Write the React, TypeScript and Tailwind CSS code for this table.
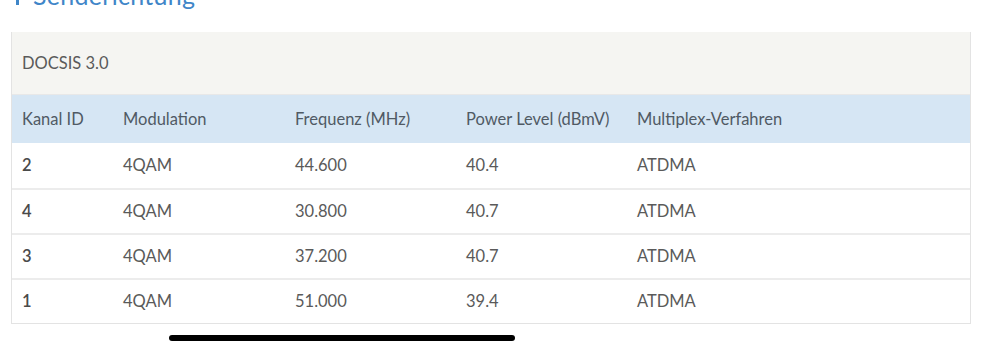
import React from 'react';

const rows = [
  { id: '2', mod: '4QAM', freq: '44.600', power: '40.4', mux: 'ATDMA' },
  { id: '4', mod: '4QAM', freq: '30.800', power: '40.7', mux: 'ATDMA' },
  { id: '3', mod: '4QAM', freq: '37.200', power: '40.7', mux: 'ATDMA' },
  { id: '1', mod: '4QAM', freq: '51.000', power: '39.4', mux: 'ATDMA' },
];

const cols = ['w-[111px] pl-[10px]', 'w-[172px]', 'w-[171px]', 'w-[171px]', 'flex-1'];

export default function App() {
  return (
    <div className="relative w-[998px] h-[350px] bg-white overflow-hidden" style={{ fontFamily: 'Lato, "Open Sans", sans-serif' }}>
      {/* cut-off section title */}
      <div className="h-[32px] overflow-hidden">
        <div className="flex items-end -mt-[21px]">
          <span className="ml-[16px] w-[3px] h-[24px] mb-[6px] bg-[#3f86c8]" />
          <h2 className="ml-[14px] text-[25px] leading-[32px] tracking-[0.3px] text-[#3f86c8]">Senderichtung</h2>
        </div>
      </div>

      <div className="mx-[11px] w-[960px] border-x border-b border-[#e3e3e3] text-[16.5px] text-[#5a5a5a]">
        <div className="h-[63px] flex items-center pl-[10px] bg-[#f5f5f2] border-b border-[#e8e8e8]">
          DOCSIS 3.0
        </div>
        <div className="h-[48px] flex items-center bg-[#d6e6f4] text-[#505a64]">
          <div className={cols[0]}>Kanal ID</div>
          <div className={cols[1]}>Modulation</div>
          <div className={cols[2]}>Frequenz (MHz)</div>
          <div className={cols[3]}>Power Level (dBmV)</div>
          <div className={cols[4]}>Multiplex-Verfahren</div>
        </div>
        {rows.map((r, i) => (
          <div key={i} className={`h-[45px] flex items-center ${i > 0 ? 'border-t-2 border-[#ececec]' : ''}`}>
            <div className={`${cols[0]} font-semibold text-[#4a4a4a]`}>{r.id}</div>
            <div className={cols[1]}>{r.mod}</div>
            <div className={cols[2]}>{r.freq}</div>
            <div className={cols[3]}>{r.power}</div>
            <div className={cols[4]}>{r.mux}</div>
          </div>
        ))}
      </div>

      {/* home indicator */}
      <div className="absolute left-[169px] top-[335px] w-[346px] h-[6px] rounded-full bg-black" />
    </div>
  );
}
